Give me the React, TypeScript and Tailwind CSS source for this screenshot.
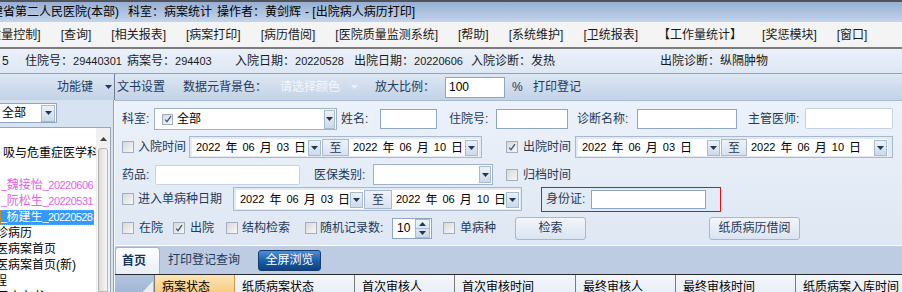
import React from 'react';

const menus = ['[质量控制]', '[查询]', '[相关报表]', '[病案打印]', '[病历借阅]', '[医院质量监测系统]', '[帮助]', '[系统维护]', '[卫统报表]', '【工作量统计】', '[奖惩模块]', '[窗口]'];

const columns = [
  { label: '纸质病案状态', w: 'w-[120px]' },
  { label: '首次审核人', w: 'w-[100px]' },
  { label: '首次审核时间', w: 'w-[121px]' },
  { label: '最终审核人', w: 'w-[100px]' },
  { label: '最终审核时间', w: 'w-[120px]' },
  { label: '纸质病案入库时间', w: 'w-[120px]' },
];

function Caret({ light }: { light?: boolean }) {
  return (
    <svg width="7" height="4" viewBox="0 0 7 4" className={light ? 'text-[#eef3fa]' : 'text-[#1e395b]'}>
      <path d="M0 0H7L3.5 4Z" fill="currentColor" />
    </svg>
  );
}

function Check({ checked, small }: { checked?: boolean; small?: boolean }) {
  return (
    <span
      className={`${small ? 'w-[11px] h-[11px]' : 'w-[12px] h-[12px]'} shrink-0 flex items-center justify-center border border-[#a0aec2] bg-gradient-to-br from-[#d8d8d8] to-[#f8f8f8]`}
    >
      {checked && (
        <svg width="8" height="8" viewBox="0 0 8 8">
          <path d="M1.2 4.6L3 6.6L7 1.2" stroke="#3d5b86" strokeWidth="1.4" fill="none" />
        </svg>
      )}
    </span>
  );
}

function Label({ cls, children }: { cls: string; children: React.ReactNode }) {
  return <span className={`shrink-0 whitespace-nowrap text-[#1e395b] ${cls}`}>{children}</span>;
}

function DateField({ cls, day }: { cls: string; day: string }) {
  return (
    <div className={`flex h-full shrink-0 items-center bg-white ${cls}`}>
      <span className="flex items-center gap-[5px] whitespace-nowrap pl-[4px] text-black">
        <span className="text-[11px]">2022</span>
        <span>年</span>
        <span className="text-[11px]">06</span>
        <span>月</span>
        <span className="text-[11px]">{day}</span>
        <span>日</span>
      </span>
      <span className="ml-auto mr-[1px] flex h-[16px] w-[13px] shrink-0 items-center justify-center border border-[#a9bbd3] bg-gradient-to-b from-[#eef3fa] to-[#cbd9ea]">
        <Caret />
      </span>
    </div>
  );
}

function To({ cls }: { cls: string }) {
  return (
    <span className={`flex h-full shrink-0 items-center justify-center border border-[#a9bbd3] bg-gradient-to-b from-[#eef3fa] to-[#d8e2ef] text-[#1e395b] ${cls}`}>
      至
    </span>
  );
}

function Button({ cls, children }: { cls: string; children: React.ReactNode }) {
  return (
    <span className={`flex h-[23px] shrink-0 items-center justify-center rounded-[3px] border border-[#a6b8d1] bg-gradient-to-b from-[#f3f6fb] to-[#dae4f1] text-[#1e395b] ${cls}`}>
      {children}
    </span>
  );
}

function Patient({ name, date }: { name: string; date: string }) {
  return (
    <div className="flex h-[16px] shrink-0 items-center pl-[1px] text-[#e062e4]">
      <span className="text-[11px] tracking-[-0.5px]">_</span>
      {name}
      <span className="text-[11px] tracking-[-0.5px]">_{date}</span>
    </div>
  );
}

export default function App() {
  return (
    <div className="flex h-[292px] w-[902px] flex-col overflow-hidden bg-[#dfe8f4] font-['Liberation_Sans','Noto_Sans_CJK_SC',sans-serif] text-[12px] leading-none text-black">
      {/* title bar */}
      <div className="flex h-[22px] shrink-0 items-center whitespace-nowrap border-t-2 border-[#50545a] bg-gradient-to-b from-[#98afd2] to-[#c3d5ec]">
        <span className="ml-[-9px] w-[137px] shrink-0">建省第二人民医院(本部)</span>
        <span className="w-[89px] shrink-0">科室：病案统计</span>
        <span className="w-[88px] shrink-0">操作者：黄剑辉</span>
        <span>- [出院病人病历打印]</span>
      </div>

      {/* menu */}
      <div className="flex h-[27px] shrink-0 items-center gap-[20px] whitespace-nowrap border-b-2 border-[#7d7d7d] bg-[#f4f4f4] text-[#1a1a1a]">
        {menus.map((m, i) => (
          <span key={m} className={i === 0 ? 'ml-[-14px] shrink-0' : 'shrink-0'}>
            {m}
          </span>
        ))}
      </div>

      {/* patient info */}
      <div className="flex h-[25px] shrink-0 items-center whitespace-nowrap border-b border-[#8ea3c1] bg-gradient-to-b from-[#ebf1fa] to-[#dde7f4] pl-[2px] text-[#1a1a1a]">
        <span className="w-[23px] shrink-0">5</span>
        <span className="w-[102px] shrink-0">住院号：<span className="text-[11px]">29440301</span></span>
        <span className="w-[108px] shrink-0">病案号：<span className="text-[11px]">294403</span></span>
        <span className="w-[119px] shrink-0">入院日期：<span className="text-[11px]">20220528</span></span>
        <span className="w-[117px] shrink-0">出院日期：<span className="text-[11px]">20220606</span></span>
        <span className="w-[189px] shrink-0">入院诊断：发热</span>
        <span>出院诊断：纵隔肿物</span>
      </div>

      {/* toolbar */}
      <div className="flex h-[26px] shrink-0 items-center whitespace-nowrap bg-gradient-to-b from-[#dde7f4] to-[#c3d2e7] pl-[57px] text-[#1e395b]">
        <span className="w-[48px] shrink-0">功能键</span>
        <span className="flex w-[9px] shrink-0 items-center">
          <Caret />
        </span>
        <span className="h-[26px] w-[1px] shrink-0 bg-[#6f7f96]" />
        <span className="ml-[2px] w-[66px] shrink-0">文书设置</span>
        <span className="w-[97px] shrink-0">数据元背景色：</span>
        <span className="w-[71px] shrink-0 text-[#f4f7fb]">请选择颜色</span>
        <span className="flex w-[24px] shrink-0 items-center">
          <Caret light />
        </span>
        <span className="w-[70px] shrink-0">放大比例：</span>
        <span className="flex h-[21px] w-[60px] shrink-0 items-center border border-[#8ea6c6] bg-white pl-[3px] text-black">100</span>
        <span className="ml-[7px] w-[21px] shrink-0">%</span>
        <span>打印登记</span>
      </div>

      {/* main */}
      <div className="flex min-h-0 flex-1">
        {/* left tree */}
        <div className="flex w-[114px] shrink-0 flex-col border-r border-[#8da2bf] bg-[#d8e3f1]">
          <div className="ml-[-2px] mt-[3px] flex h-[20px] w-[59px] shrink-0 items-center border border-[#8fa5c2] bg-white">
            <span className="pl-[3px]">全部</span>
            <span className="ml-auto mr-[1px] flex h-[17px] w-[14px] items-center justify-center border border-[#a9bbd3] bg-gradient-to-b from-[#eef3fa] to-[#cbd9ea]">
              <Caret />
            </span>
          </div>
          <div className="mt-[4px] flex min-h-0 w-[111px] flex-1 border-r border-t border-[#9aa6b4] bg-white">
            <div className="flex w-[96px] shrink-0 flex-col overflow-hidden whitespace-nowrap pt-[1px]">
              <div className="h-[16px] shrink-0" />
              <div className="flex h-[16px] shrink-0 items-center pl-[3px]">吸与危重症医学科</div>
              <div className="h-[16px] shrink-0" />
              <Patient name="魏接怡" date="20220606" />
              <Patient name="阮松生" date="20220531" />
              <div className="flex h-[16px] shrink-0 items-center">
                <span className="flex h-[15px] w-[94px] items-center overflow-hidden border border-dotted border-[#c59a3d] bg-[#3399ff] text-white">
                  <span className="text-[11px] tracking-[-0.6px]">_</span>
                  杨建生
                  <span className="text-[11px] tracking-[-0.6px]">_20220528</span>
                </span>
              </div>
              <div className="flex h-[16px] shrink-0 items-center">
                <span className="ml-[-4px]">诊病历</span>
              </div>
              <div className="flex h-[16px] shrink-0 items-center">
                <span className="ml-[-4px]">医病案首页</span>
              </div>
              <div className="flex h-[16px] shrink-0 items-center">
                <span className="ml-[-4px]">医病案首页(新)</span>
              </div>
              <div className="flex h-[16px] shrink-0 items-center">
                <span className="ml-[-5px]">程</span>
              </div>
              <div className="flex h-[16px] shrink-0 items-center">
                <span className="ml-[-4px]">医疗文书</span>
              </div>
            </div>
            <div className="flex w-[14px] shrink-0 flex-col items-center bg-[#f0f0f0]">
              <span className="mt-[3px] flex h-[15px] w-[13px] items-center justify-center">
                <svg width="7" height="4" viewBox="0 0 7 4">
                  <path d="M0 4H7L3.5 0Z" fill="#404040" />
                </svg>
              </span>
              <span className="mt-[2px] w-[10px] flex-1 rounded-t-[3px] border border-[#b5b5b5] bg-gradient-to-r from-[#dcdcdc] to-[#f6f6f6]" />
            </div>
          </div>
        </div>

        {/* right */}
        <div className="flex w-[788px] shrink-0 flex-col border-l border-[#f4f7fb]">
          {/* query form */}
          <div className="flex h-[146px] shrink-0 flex-col border-b border-t border-b-white border-t-[#a8bad2] bg-gradient-to-b from-[#ecf2fb] to-[#dee7f3] pl-[7px] pt-[7px]">
            {/* row 1 */}
            <div className="flex h-[22px] items-center">
              <Label cls="w-[32px]">科室:</Label>
              <div className="flex h-[22px] w-[183px] shrink-0 items-center border border-[#9fb2cc] bg-white pl-[7px]">
                <Check checked small />
                <span className="ml-[4px]">全部</span>
                <span className="ml-auto mr-[1px] flex h-[19px] w-[11px] items-center justify-center border border-[#a9bbd3] bg-gradient-to-b from-[#eef3fa] to-[#cbd9ea]">
                  <Caret />
                </span>
              </div>
              <Label cls="ml-[4px] w-[39px]">姓名:</Label>
              <span className="h-[20px] w-[57px] shrink-0 border border-[#8ea6c6] bg-white" />
              <Label cls="ml-[12px] w-[47px]">住院号:</Label>
              <span className="h-[20px] w-[72px] shrink-0 border border-[#8ea6c6] bg-white" />
              <Label cls="ml-[9px] w-[60px]">诊断名称:</Label>
              <span className="h-[20px] w-[100px] shrink-0 border border-[#8ea6c6] bg-white" />
              <Label cls="ml-[11px] w-[57px]">主管医师:</Label>
              <span className="mt-[-2px] h-[21px] w-[88px] shrink-0 rounded-[2px] border border-[#c6d3e3] bg-white" />
            </div>

            {/* row 2 */}
            <div className="mt-[6px] flex h-[22px] items-center">
              <Check />
              <Label cls="ml-[4px] w-[51px]">入院时间</Label>
              <div className="flex h-[22px] w-[293px] shrink-0 border border-[#a7b9d1] bg-[#e3eaf4] pb-[1px] pl-[2px] pr-[2px] pt-[2px]">
                <DateField cls="w-[130px]" day="03" />
                <To cls="w-[27px]" />
                <DateField cls="w-[130px]" day="10" />
              </div>
              <span className="ml-[24px]">
                <Check checked />
              </span>
              <Label cls="ml-[5px] w-[52px]">出院时间</Label>
              <div className="flex h-[22px] w-[318px] shrink-0 border border-[#a7b9d1] bg-[#e3eaf4] pb-[1px] pl-[2px] pr-[4px] pt-[2px]">
                <DateField cls="w-[143px]" day="03" />
                <To cls="w-[26px]" />
                <DateField cls="w-[141px]" day="10" />
              </div>
            </div>

            {/* row 3 */}
            <div className="mt-[6px] flex h-[21px] items-center">
              <Label cls="w-[33px]">药品:</Label>
              <span className="h-[20px] w-[145px] shrink-0 rounded-[2px] border border-[#c6d3e3] bg-white" />
              <Label cls="ml-[14px] w-[59px]">医保类别:</Label>
              <div className="flex h-[21px] w-[120px] shrink-0 items-center border border-[#9fb2cc] bg-white">
                <span className="ml-auto mr-[1px] flex h-[17px] w-[12px] items-center justify-center border border-[#a9bbd3] bg-gradient-to-b from-[#eef3fa] to-[#cbd9ea]">
                  <Caret />
                </span>
              </div>
              <span className="ml-[13px]">
                <Check />
              </span>
              <Label cls="ml-[5px]">归档时间</Label>
            </div>

            {/* row 4 */}
            <div className="mt-[2px] flex h-[24px] items-center">
              <Check />
              <Label cls="ml-[4px] w-[95px]">进入单病种日期</Label>
              <div className="flex h-[24px] w-[289px] shrink-0 border border-[#a7b9d1] bg-[#e3eaf4] pb-[1px] pl-[2px] pr-[1px] pt-[2px]">
                <DateField cls="w-[128px]" day="03" />
                <To cls="w-[28px]" />
                <DateField cls="w-[128px]" day="10" />
              </div>
              <div className="ml-[19px] flex h-[25px] w-[180px] shrink-0 items-center border border-[#e01010] pl-[4px]">
                <Label cls="w-[45px]">身份证:</Label>
                <span className="h-[19px] w-[115px] shrink-0 border border-[#8ea6c6] bg-white" />
              </div>
            </div>

            {/* row 5 */}
            <div className="mt-[5px] flex h-[24px] items-center">
              <Check />
              <Label cls="ml-[5px] w-[34px]">在院</Label>
              <Check checked />
              <Label cls="ml-[5px] w-[36px]">出院</Label>
              <Check />
              <Label cls="ml-[4px] w-[63px]">结构检索</Label>
              <Check />
              <Label cls="ml-[3px] w-[72px]">随机记录数:</Label>
              <div className="flex h-[21px] w-[40px] shrink-0 items-center border border-[#8ea6c6] bg-white">
                <span className="pl-[4px]">10</span>
                <span className="ml-auto mr-[1px] flex h-[19px] w-[15px] flex-col border border-[#a9bbd3] bg-gradient-to-b from-[#eef3fa] to-[#cbd9ea]">
                  <span className="flex flex-1 items-center justify-center border-b border-[#a9bbd3]">
                    <svg width="7" height="4" viewBox="0 0 7 4">
                      <path d="M0 4H7L3.5 0Z" fill="#1e395b" />
                    </svg>
                  </span>
                  <span className="flex flex-1 items-center justify-center">
                    <Caret />
                  </span>
                </span>
              </div>
              <span className="ml-[11px]">
                <Check />
              </span>
              <Label cls="ml-[5px] w-[55px]">单病种</Label>
              <Button cls="w-[71px]">检索</Button>
              <Button cls="ml-[123px] w-[91px]">纸质病历借阅</Button>
            </div>
          </div>

          {/* tabs */}
          <div className="flex h-[28px] shrink-0 items-center whitespace-nowrap bg-[#bdcce3]">
            <span className="flex h-[27px] w-[45px] shrink-0 items-center self-end rounded-t-[3px] border border-b-0 border-[#9fb3cf] bg-gradient-to-b from-white to-[#e8eff8] pl-[6px] font-bold text-[#15355f]">
              首页
            </span>
            <span className="ml-[8px] w-[90px] shrink-0 text-[#1e395b]">打印登记查询</span>
            <span className="flex h-[21px] w-[63px] shrink-0 items-center justify-center rounded-[3px] border border-[#173c6e] bg-gradient-to-b from-[#4f8fd6] via-[#1b5fae] to-[#0d3f82] text-white">
              全屏浏览
            </span>
          </div>

          {/* grid header */}
          <div className="flex h-[24px] shrink-0 whitespace-nowrap border-t border-[#2a2a2a] bg-gradient-to-b from-[#f4f7fb] to-[#e6edf6]">
            <span className="flex w-[40px] shrink-0 items-end justify-end border-r border-[#7a7a7a] bg-gradient-to-b from-[#b2c5df] to-[#9db2d2] pb-[2px] pr-[1px]">
              <svg width="14" height="15" viewBox="0 0 14 15">
                <path d="M14 0V15H0Z" fill="#e9edf3" />
              </svg>
            </span>
            <span className="flex w-[80px] shrink-0 items-center border-r border-[#d19a45] bg-gradient-to-b from-[#fce6b8] to-[#f5c36a] pl-[7px]">病案状态</span>
            {columns.map((c) => (
              <span key={c.label} className={`flex shrink-0 items-center border-r border-[#7a7a7a] pl-[7px] ${c.w}`}>
                {c.label}
              </span>
            ))}
          </div>
        </div>
      </div>
    </div>
  );
}
